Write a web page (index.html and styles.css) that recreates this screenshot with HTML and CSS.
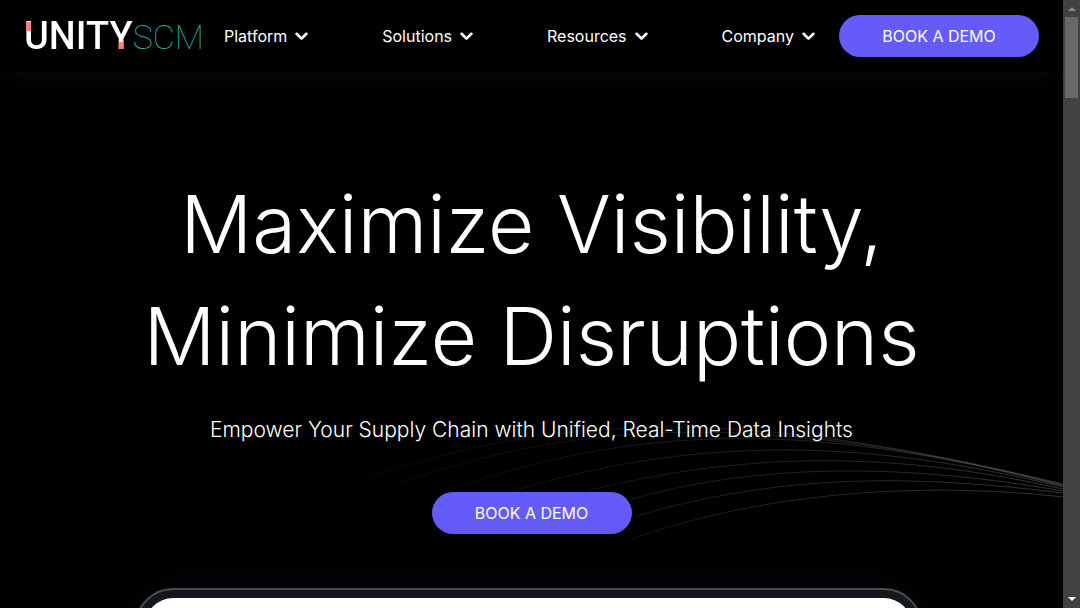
FILE: index.html
```html
<!DOCTYPE html>
<html lang="en">
<head>
<meta charset="utf-8">
<meta name="viewport" content="width=device-width, initial-scale=1">
<title>Unity SCM</title>
<link rel="stylesheet" href="styles.css">
</head>
<body>
<div class="viewport">
  <div class="page">
    <header class="header">
      <a class="logo" href="#" aria-label="Unity SCM home"><span class="logo-unity">UNITY</span><span class="logo-scm">SCM</span></a>
      <nav class="nav">
        <button class="nav-item" type="button">Platform <svg class="chevron" viewBox="0 0 12 8" aria-hidden="true"><path d="M1.500 1.500 6 6l4.500-4.500"/></svg></button>
        <button class="nav-item" type="button">Solutions <svg class="chevron" viewBox="0 0 12 8" aria-hidden="true"><path d="M1.500 1.500 6 6l4.500-4.500"/></svg></button>
        <button class="nav-item" type="button">Resources <svg class="chevron" viewBox="0 0 12 8" aria-hidden="true"><path d="M1.500 1.500 6 6l4.500-4.500"/></svg></button>
        <button class="nav-item" type="button">Company <svg class="chevron" viewBox="0 0 12 8" aria-hidden="true"><path d="M1.500 1.500 6 6l4.500-4.500"/></svg></button>
      </nav>
      <a class="button" href="#demo">BOOK A DEMO</a>
    </header>
    <main class="hero">
      <svg class="waves" viewBox="0 0 723 120" aria-hidden="true">
        <defs>
          <linearGradient id="fade" gradientUnits="userSpaceOnUse" x1="20" y1="0" x2="723" y2="0">
            <stop offset="0" stop-color="#fff" stop-opacity="0.03"/>
            <stop offset="0.5" stop-color="#fff" stop-opacity="0.11"/>
            <stop offset="1" stop-color="#fff" stop-opacity="0.2"/>
          </linearGradient>
        </defs>
        <g fill="none" stroke="url(#fade)">
          <path d="M20 61C240-18 440-4 723 64"/>
          <path d="M62 63C260-9 460-1 723 65"/>
          <path d="M125 65C320-2 500 8 723 66"/>
          <path d="M173 71C360 14 530 20 723 67"/>
          <path d="M247 71C410 30 560 32 723 69"/>
          <path d="M292 79C430 40 580 46 723 71"/>
          <path d="M297 96C440 54 570 54 723 73"/>
          <path d="M292 119C430 70 590 62 723 77"/>
        </g>
      </svg>
      <h1 class="title">Maximize Visibility, Minimize Disruptions</h1>
      <p class="subtitle">Empower Your Supply Chain with Unified, Real-Time Data Insights</p>
      <a class="button" href="#demo">BOOK A DEMO</a>
      <div class="device"><div class="screen"></div></div>
    </main>
  </div>
  <div class="scrollbar" aria-hidden="true">
    <svg class="arrow arrow-up" viewBox="0 0 8 4"><path d="M0 4 4 0l4 4z"/></svg>
    <div class="thumb"></div>
    <svg class="arrow arrow-down" viewBox="0 0 8 4"><path d="M0 0h8L4 4z"/></svg>
  </div>
</div>
</body>
</html>
```
FILE: styles.css
```css
* { box-sizing: border-box; }

body {
  margin: 0;
  background: #000;
  color: #fff;
  font-family: Inter, "Liberation Sans", sans-serif;
}

.viewport {
  display: grid;
  grid-template-columns: 1fr 17px;
  height: 100vh;
  overflow: hidden;
}

.page {
  min-width: 0;
  overflow: hidden;
}

.header {
  position: relative;
  display: flex;
  align-items: center;
  gap: 24px;
  height: 72px;
  padding: 0 24px;
  background: #000;
  box-shadow: 0 10px 20px -6px #0a0a12;
}

.logo {
  display: flex;
  align-items: baseline;
  flex: none;
  width: 176px;
  color: #fff;
  font-family: Roboto, sans-serif;
  font-size: 38px;
  line-height: 40px;
  text-decoration: none;
}

.logo-unity {
  font-weight: 500;
  background: linear-gradient(#ff7f80, #ff7f80) 0 6px / 8px 9px no-repeat text,
    linear-gradient(#ff7f80, #ff7f80) 88px 26px / 16px 14px no-repeat text,
    linear-gradient(#fff, #fff) text;
  color: transparent;
}

.logo-scm {
  color: #22b0a0;
  font-size: 34px;
  font-weight: 100;
}

.nav {
  display: flex;
  flex: 1;
  justify-content: space-between;
}

.nav-item {
  display: flex;
  align-items: center;
  gap: 8px;
  padding: 0;
  border: 0;
  background: none;
  color: #fff;
  font: 400 16px/24px Inter, sans-serif;
}

.chevron {
  width: 13px;
  height: 9px;
  fill: none;
  stroke: #fff;
  stroke-width: 2.4;
  stroke-linecap: round;
  stroke-linejoin: round;
}

.button {
  flex: none;
  width: 200px;
  border-radius: 21px;
  background: #655bf8;
  color: #fff;
  font-size: 16px;
  line-height: 42px;
  text-align: center;
  text-decoration: none;
}

.hero {
  position: relative;
  display: flex;
  flex-direction: column;
  align-items: center;
  padding-top: 96px;
}

.hero > * { position: relative; }

.hero > .waves {
  position: absolute;
  top: 348px;
  right: 0;
  width: 68%;
}

.title {
  max-width: 820px;
  margin: 0;
  font-size: 80px;
  font-weight: 300;
  line-height: 112px;
  text-align: center;
}

.subtitle {
  margin: 24px 0 48px;
  font-size: 21px;
  font-weight: 300;
  line-height: 28px;
  text-align: center;
}

.device {
  width: 74%;
  height: 480px;
  margin: 54px 6px 0 0;
  padding: 8px;
  border: 2px solid #494c4f;
  border-radius: 38px;
  background: #14171b;
  box-shadow: 0 0 60px #04070c;
}

.screen {
  height: 100%;
  border-radius: 28px;
  background: #fff;
}

.scrollbar {
  display: flex;
  flex-direction: column;
  align-items: center;
  padding: 7px 0;
  background: #424242;
}

.arrow { width: 8px; height: 4px; }
.arrow-up { fill: #858585; }
.arrow-down { margin-top: auto; fill: #fff; }

.thumb {
  width: 13px;
  height: 81px;
  margin-top: 6px;
  background: #686868;
}
```
